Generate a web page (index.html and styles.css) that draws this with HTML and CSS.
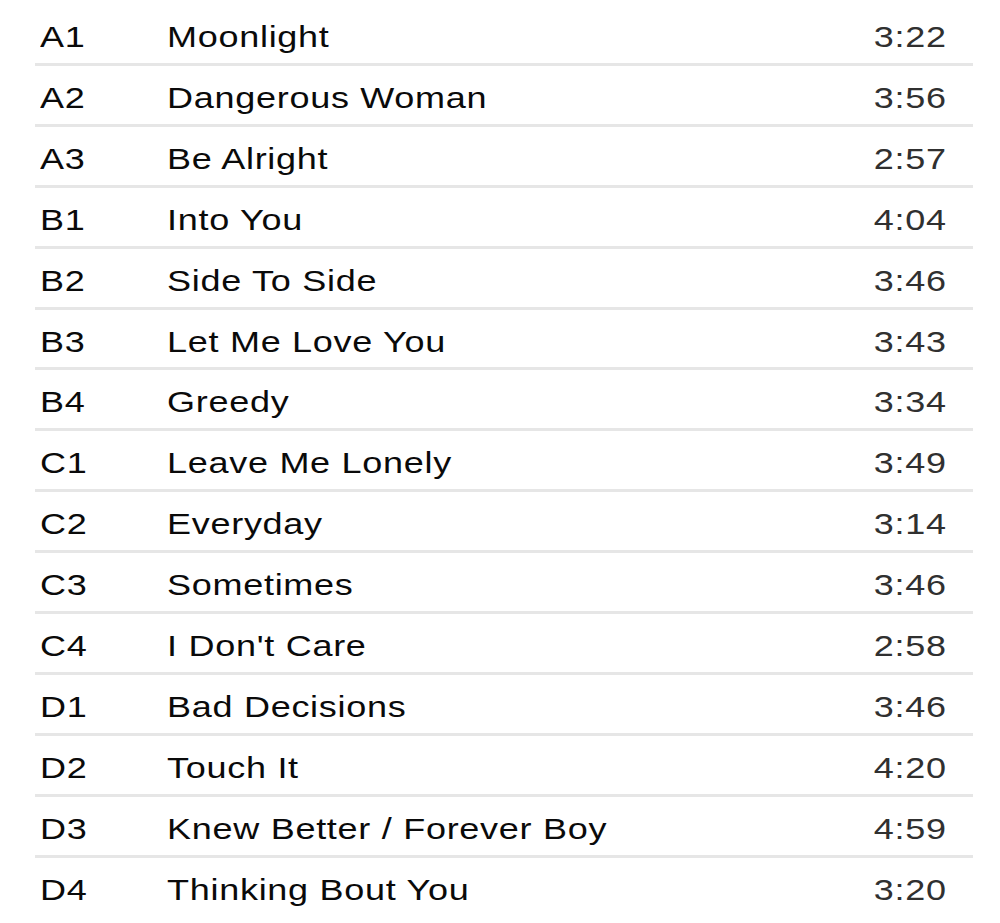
FILE: index.html
```html
<!DOCTYPE html>
<html>
<head>
    <title>Tracklist</title>
    <link rel="stylesheet" href="styles.css">
</head>
<body>
    <!-- Track listing -->
    <ul class="tracklist">
        <li class="track"><span class="code">A1</span><span class="title">Moonlight</span><span class="time">3:22</span></li>
        <li class="track"><span class="code">A2</span><span class="title">Dangerous Woman</span><span class="time">3:56</span></li>
        <li class="track"><span class="code">A3</span><span class="title">Be Alright</span><span class="time">2:57</span></li>
        <li class="track"><span class="code">B1</span><span class="title">Into You</span><span class="time">4:04</span></li>
        <li class="track"><span class="code">B2</span><span class="title">Side To Side</span><span class="time">3:46</span></li>
        <li class="track"><span class="code">B3</span><span class="title">Let Me Love You</span><span class="time">3:43</span></li>
        <li class="track"><span class="code">B4</span><span class="title">Greedy</span><span class="time">3:34</span></li>
        <li class="track"><span class="code">C1</span><span class="title">Leave Me Lonely</span><span class="time">3:49</span></li>
        <li class="track"><span class="code">C2</span><span class="title">Everyday</span><span class="time">3:14</span></li>
        <li class="track"><span class="code">C3</span><span class="title">Sometimes</span><span class="time">3:46</span></li>
        <li class="track"><span class="code">C4</span><span class="title">I Don't Care</span><span class="time">2:58</span></li>
        <li class="track"><span class="code">D1</span><span class="title">Bad Decisions</span><span class="time">3:46</span></li>
        <li class="track"><span class="code">D2</span><span class="title">Touch It</span><span class="time">4:20</span></li>
        <li class="track"><span class="code">D3</span><span class="title">Knew Better / Forever Boy</span><span class="time">4:59</span></li>
        <li class="track last"><span class="code">D4</span><span class="title">Thinking Bout You</span><span class="time">3:20</span></li>
    </ul>
</body>
</html>
```
FILE: styles.css
```css
* {
    margin: 0px;
    padding: 0px;
    font-family: 'Liberation Sans', Arial, sans-serif;
}

body {
    background-color: #ffffff;
    padding-top: 5px;
}

.tracklist {
    list-style: none;
    margin-left: 35px;
    width: 938px;
}

.track {
    display: flex;
    align-items: baseline;
    padding: 7px 26px 0px 5px;
    line-height: 50.9px;
    font-size: 30px;
    letter-spacing: 0.6px;
    color: #0a0a0a;
    border-bottom: 3px solid #e6e6e6;
}

.track.last {
    border-bottom: none;
}

.code,
.title,
.time {
    display: inline-block;
    transform: scaleX(1.2);
    transform-origin: left;
}

.code {
    width: 127px;
}

.title {
    flex: 1;
    white-space: nowrap;
}

.time {
    color: #303030;
    transform-origin: right;
}
```
